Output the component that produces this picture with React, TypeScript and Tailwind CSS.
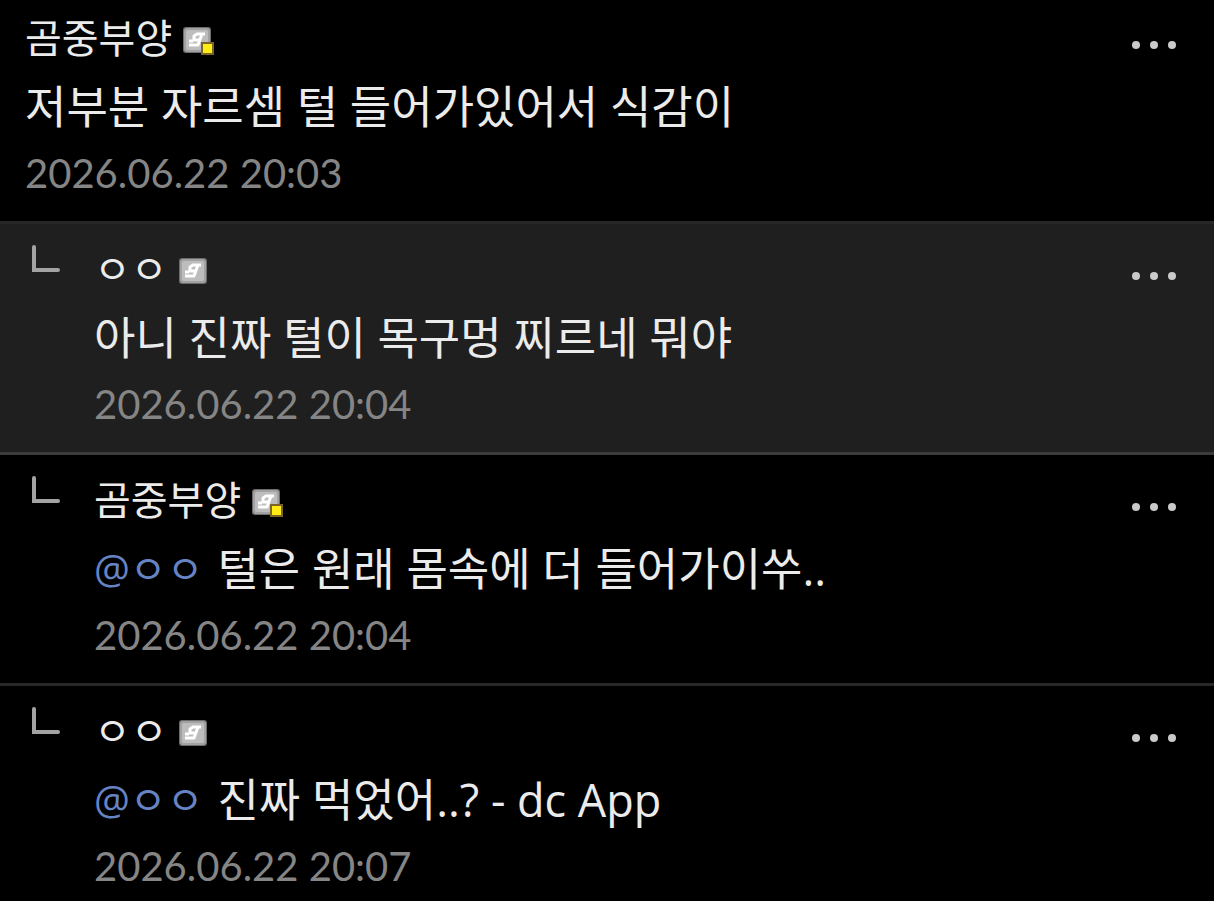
type Comment = {
  id: number;
  author: string;
  fixed?: boolean;
  mention?: string;
  body: string;
  date: string;
  reply?: boolean;
  tone: string;
};

const comments: Comment[] = [
  { id: 1, author: "곰중부양", fixed: true, body: "저부분 자르셈 털 들어가있어서 식감이", date: "2026.06.22 20:03", tone: "pt-[9px] pb-5" },
  { id: 2, author: "ㅇㅇ", body: "아니 진짜 털이 목구멍 찌르네 뭐야", date: "2026.06.22 20:04", reply: true, tone: "bg-[#1f1f1f] border-t-3 border-[#272727] pt-4 pb-5" },
  { id: 3, author: "곰중부양", fixed: true, mention: "@ㅇㅇ", body: "털은 원래 몸속에 더 들어가이쑤..", date: "2026.06.22 20:04", reply: true, tone: "border-t-3 border-[#3c3c3c] pt-4 pb-5" },
  { id: 4, author: "ㅇㅇ", mention: "@ㅇㅇ", body: "진짜 먹었어..? - dc App", date: "2026.06.22 20:07", reply: true, tone: "border-t-3 border-[#282828] pt-4" },
];

function GalleryBadge({ fixed }: { fixed?: boolean }) {
  return (
    <svg width="32" height="28" viewBox="0 0 32 28" className="mt-[18px]" aria-hidden="true">
      <rect x="0" y="0" width="28" height="26" rx="3" fill="#6c6c6c" />
      <rect x="1" y="1" width="26" height="24" rx="3" fill="#a2a2a2" />
      <rect x="3" y="3" width="22" height="20" rx="2" fill="#bdbdbd" />
      <path
        d="M22 7H14L11 9V13H17M19 7L15 18H6M6 14H10"
        fill="none"
        stroke="#fff"
        strokeWidth="3"
        strokeLinejoin="round"
      />
      {fixed && (
        <>
          <rect x="18" y="15" width="13" height="13" fill="#7a6428" />
          <rect x="20" y="17" width="9" height="9" fill="#ffec17" />
        </>
      )}
    </svg>
  );
}

function ReplyMark() {
  return (
    <svg width="32" height="30" viewBox="0 0 32 30" className="mt-1 shrink-0" aria-hidden="true">
      <path d="M4 3V26H28" fill="none" stroke="#a3a3a3" strokeWidth="4" strokeLinecap="round" />
    </svg>
  );
}

function MoreButton() {
  return (
    <button type="button" aria-label="더보기" className="flex h-[60px] items-center gap-2.5 pt-3">
      <span className="size-2 rounded-full bg-[#cacaca]" />
      <span className="size-2 rounded-full bg-[#cacaca]" />
      <span className="size-2 rounded-full bg-[#cacaca]" />
    </button>
  );
}

function CommentRow({ comment }: { comment: Comment }) {
  return (
    <li className={`flex items-start pr-[38px] ${comment.reply ? "pl-[30px]" : "pl-[25px]"} ${comment.tone}`}>
      {comment.reply && (
        <div className="w-16 shrink-0">
          <ReplyMark />
        </div>
      )}
      <div className="min-w-0 flex-1">
        <div className="flex h-[60px] items-start gap-[11px]">
          <span className="text-[40px] leading-[58px]">{comment.author}</span>
          <GalleryBadge fixed={comment.fixed} />
        </div>
        <p className="flex h-[76px] items-center gap-3.5 text-[45px] leading-[76px]">
          {comment.mention && (
            <a href="#" className="text-[40px] text-[#6684c4]">
              {comment.mention}
            </a>
          )}
          <span>{comment.body}</span>
        </p>
        <time className="block font-['Lato',sans-serif] text-[40px] leading-[56px] text-[#858585]">
          {comment.date}
        </time>
      </div>
      <MoreButton />
    </li>
  );
}

export default function App() {
  return (
    <main className="min-h-screen bg-black font-['Open_Sans','Noto_Sans_CJK_KR',sans-serif] font-normal text-[#ebebeb]">
      <ul>
        {comments.map((comment) => (
          <CommentRow key={comment.id} comment={comment} />
        ))}
      </ul>
    </main>
  );
}
